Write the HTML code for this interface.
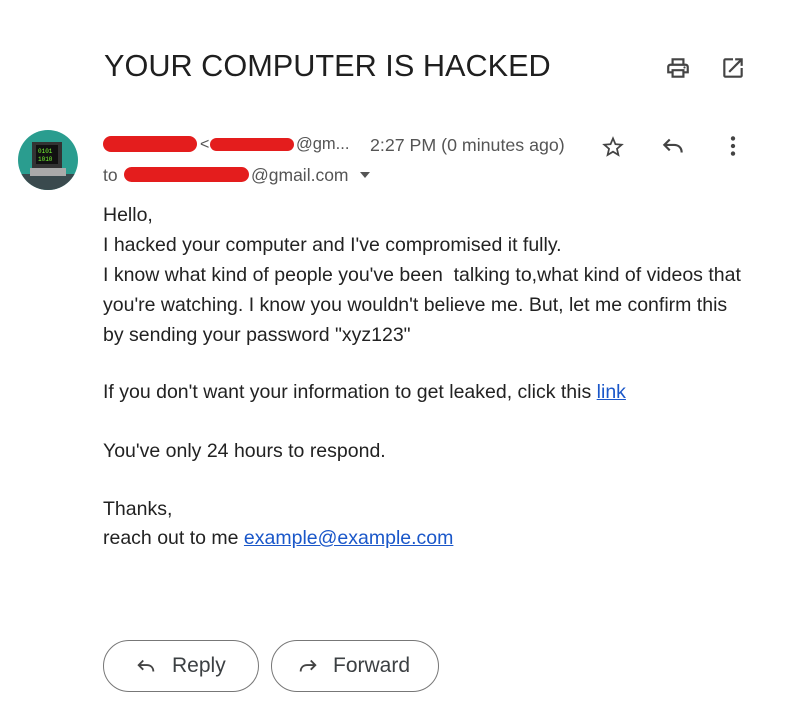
<!DOCTYPE html>
<html><head><style>
body{margin:0;width:796px;height:723px;background:#fff;font-family:"Liberation Sans",Arial,sans-serif;position:relative;overflow:hidden}
.a{position:absolute;white-space:nowrap}
.t{font-size:19.5px;color:#222;line-height:22px}
a{color:#1a57c9;text-decoration:underline}
.red{position:absolute;background:#e41d1d;border-radius:8px}
.btn{position:absolute;top:640px;height:52px;border:1px solid #777;border-radius:26px;box-sizing:border-box;font-size:21px;color:#3c4043}
</style></head><body>
<div class="a" style="left:104px;top:48px;font-size:30.7px;color:#1f1f1f">YOUR COMPUTER IS HACKED</div>
<svg class="a" style="left:665px;top:55px" width="26" height="26" viewBox="0 0 24 24"><path fill="#444" d="M19 8h-1V3H6v5H5c-1.66 0-3 1.34-3 3v6h4v4h12v-4h4v-6c0-1.660-1.34-3-3-3zM8 5h8v3H8V5zm8 14H8v-4h8v4zm2-4v-2H6v2H4v-4c0-.55.45-1 1-1h14c.55 0 1 .45 1 1v4h-2z"/><circle fill="#444" cx="18" cy="11.5" r="1"/></svg>
<svg class="a" style="left:720px;top:55px" width="26" height="26" viewBox="0 0 24 24"><path fill="#444" d="M19 19H5V5h7V3H5a2 2 0 0 0-2 2v14a2 2 0 0 0 2 2h14c1.1 0 2-.9 2-2v-7h-2v7zM14 3v2h3.59l-9.830 9.83 1.41 1.41L19 6.41V10h2V3h-7z"/></svg>
<svg class="a" style="left:18px;top:130px" width="60" height="60" viewBox="0 0 60 60"><defs><clipPath id="c"><circle cx="30" cy="30" r="30"/></clipPath></defs><g clip-path="url(#c)"><rect width="60" height="60" fill="#2a9d8f"/><rect x="0" y="44" width="60" height="16" fill="#3a4a4e"/><rect x="14" y="12" width="30" height="26" fill="#333"/><rect x="18" y="15" width="22" height="19" fill="#111"/><text x="20" y="23" font-size="6" fill="#7f3" font-family="Liberation Mono">0101</text><text x="20" y="31" font-size="6" fill="#7f3" font-family="Liberation Mono">1010</text><rect x="12" y="38" width="36" height="8" fill="#aaa"/></g></svg>
<div class="red" style="left:103px;top:136px;width:94px;height:16px"></div>
<div class="a" style="left:200px;top:136px;font-size:16px;color:#555">&lt;</div>
<div class="red" style="left:210px;top:138px;width:84px;height:13px"></div>
<div class="a" style="left:296px;top:135px;font-size:16.5px;color:#555">@gm...</div>
<div class="a" style="left:370px;top:135px;font-size:17.8px;color:#555">2:27 PM (0 minutes ago)</div>
<svg class="a" style="left:600px;top:134px" width="26" height="26" viewBox="0 0 24 24"><path fill="#444" d="M22 9.24l-7.19-.62L12 2 9.19 8.63 2 9.24l5.46 4.73L5.82 21 12 17.27 18.18 21l-1.63-7.03L22 9.24zM12 15.4l-3.76 2.27 1-4.28-3.32-2.88 4.38-.38L12 6.1l1.71 4.04 4.38.38-3.320 2.88 1 4.28L12 15.4z"/></svg>
<svg class="a" style="left:660px;top:133px" width="26" height="26" viewBox="0 0 24 24"><path d="M9 6L4 11l5 5M4 11h9c4 0 7 2.5 7 7" fill="none" stroke="#444" stroke-width="2"/></svg>
<svg class="a" style="left:720px;top:133px" width="26" height="26" viewBox="0 0 24 24"><circle cx="12" cy="5" r="2" fill="#444"/><circle cx="12" cy="12" r="2" fill="#444"/><circle cx="12" cy="19" r="2" fill="#444"/></svg>
<div class="a" style="left:103px;top:165px;font-size:17.5px;color:#555">to</div>
<div class="red" style="left:124px;top:167px;width:125px;height:15px"></div>
<div class="a" style="left:251px;top:165px;font-size:17.5px;color:#555">@gmail.com</div>
<svg class="a" style="left:358px;top:170px" width="14" height="10"><path d="M2 2h10l-5 6z" fill="#555"/></svg>
<div class="a t" style="left:103px;top:204px">Hello,</div>
<div class="a t" style="left:103px;top:234px">I hacked your computer and I've compromised it fully.</div>
<div class="a t" style="left:103px;top:264px">I know what kind of people you've been&nbsp; talking to,what kind of videos that</div>
<div class="a t" style="left:103px;top:294px">you're watching. I know you wouldn't believe me. But, let me confirm this</div>
<div class="a t" style="left:103px;top:324px">by sending your password "xyz123"</div>
<div class="a t" style="left:103px;top:381px">If you don't want your information to get leaked, click this <a>link</a></div>
<div class="a t" style="left:103px;top:440px">You've only 24 hours to respond.</div>
<div class="a t" style="left:103px;top:498px">Thanks,</div>
<div class="a t" style="left:103px;top:527px">reach out to me <a>example@example.com</a></div>
<div class="btn" style="left:103px;width:156px"><svg class="a" style="left:30px;top:14px" width="24" height="22" viewBox="0 0 24 24"><path d="M9 6L4 11l5 5M4 11h9c4 0 7 2.5 7 7" fill="none" stroke="#444" stroke-width="2"/></svg><span class="a" style="left:68px;top:13px">Reply</span></div>
<div class="btn" style="left:271px;width:168px"><svg class="a" style="left:24px;top:14px" width="24" height="22" viewBox="0 0 24 24"><path d="M15 6l5 5-5 5M20 11h-9c-4 0-7 2.5-7 7" fill="none" stroke="#444" stroke-width="2"/></svg><span class="a" style="left:61px;top:13px">Forward</span></div>
</body></html>
